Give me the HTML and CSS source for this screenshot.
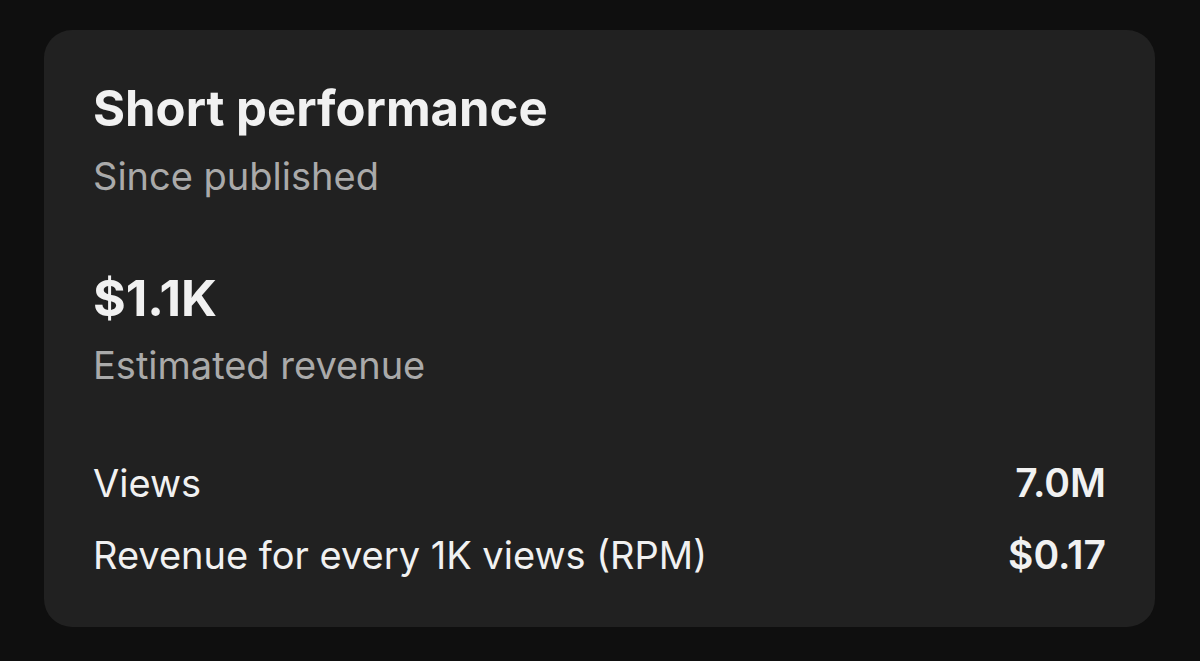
FILE: index.html
```html
<!DOCTYPE html>
<html>
<head>
<meta charset="utf-8">
<link rel="stylesheet" href="styles.css">
</head>
<body>
<div class="card">
  <div class="title">Short performance</div>
  <div class="sub">Since published</div>
  <div class="big">$1.1K</div>
  <div class="sub sub-tight">Estimated revenue</div>
  <div class="rows">
    <div class="row"><span>Views</span><span class="val">7.0M</span></div>
    <div class="row"><span>Revenue for every 1K views (RPM)</span><span class="val">$0.17</span></div>
  </div>
</div>
</body>
</html>
```
FILE: styles.css
```css
html, body {
  margin: 0;
  padding: 0;
  background: #0f0f0f;
  width: 1200px;
  height: 661px;
  overflow: hidden;
}
body {
  padding: 30px 45px 0 44px;
  box-sizing: border-box;
  font-family: Inter, "Noto Sans", sans-serif;
}
.card {
  background: #212121;
  border-radius: 28px;
  height: 597px;
  box-sizing: border-box;
  padding: 49px 49px 0 49px;
  display: flex;
  flex-direction: column;
}
.title {
  color: #f1f1f1;
  font-size: 49px;
  line-height: 60px;
  font-weight: 700;
}
.sub {
  color: #aaaaaa;
  font-size: 38px;
  line-height: 44px;
  margin-top: 15px;
}
.big {
  color: #f1f1f1;
  font-size: 50px;
  line-height: 60px;
  font-weight: 700;
  margin-top: 70px;
}
.rows {
  margin-top: 74px;
  display: flex;
  flex-direction: column;
  gap: 28px;
}
.row {
  display: flex;
  justify-content: space-between;
  align-items: baseline;
  color: #f1f1f1;
  font-size: 38px;
  line-height: 44px;
}
.val {
  font-weight: 600;
  font-size: 39px;
}
```
